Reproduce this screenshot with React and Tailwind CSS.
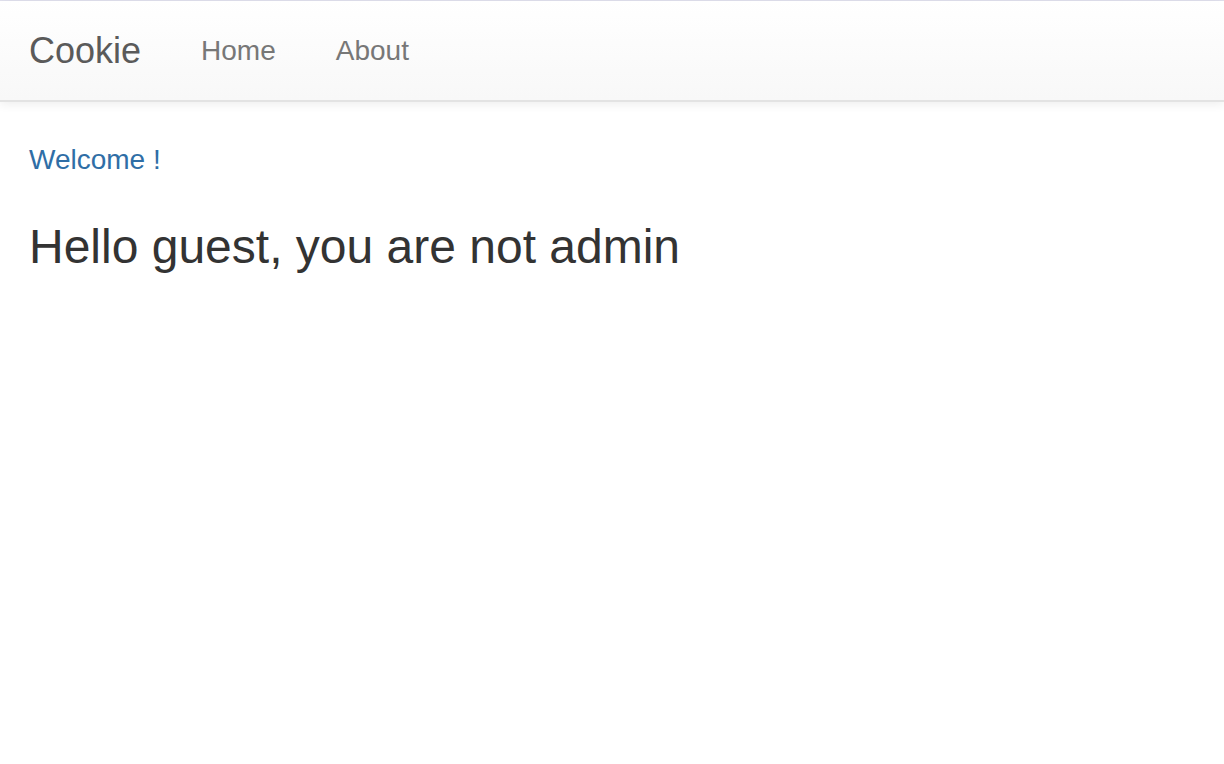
export default function App() {
  return (
    <div className="min-h-[764px] bg-white" style={{ fontFamily: '"Liberation Sans", Arial, Helvetica, sans-serif' }}>
      <div className="h-px bg-[#e1e1ee]" />
      <nav className="h-[101px] border-b-2 border-[#e3e3e3] bg-gradient-to-b from-white to-[#f8f8f8] shadow-[0_2px_10px_rgba(0,0,0,0.075)] flex items-center px-[29px]">
        <a className="text-[36px] leading-[40px] text-[#5a5a5a] pr-[30px]">Cookie</a>
        <a className="text-[28px] leading-[40px] text-[#777] px-[30px]">Home</a>
        <a className="text-[28px] leading-[40px] text-[#777] px-[30px]">About</a>
      </nav>
      <div className="px-[29px] pt-[38px]">
        <p className="text-[28px] leading-[40px] text-[#2f6ea6]">Welcome !</p>
        <h3 className="mt-[41px] text-[48px] leading-[52px] font-normal text-[#333]">Hello guest, you are not admin</h3>
      </div>
    </div>
  );
}
